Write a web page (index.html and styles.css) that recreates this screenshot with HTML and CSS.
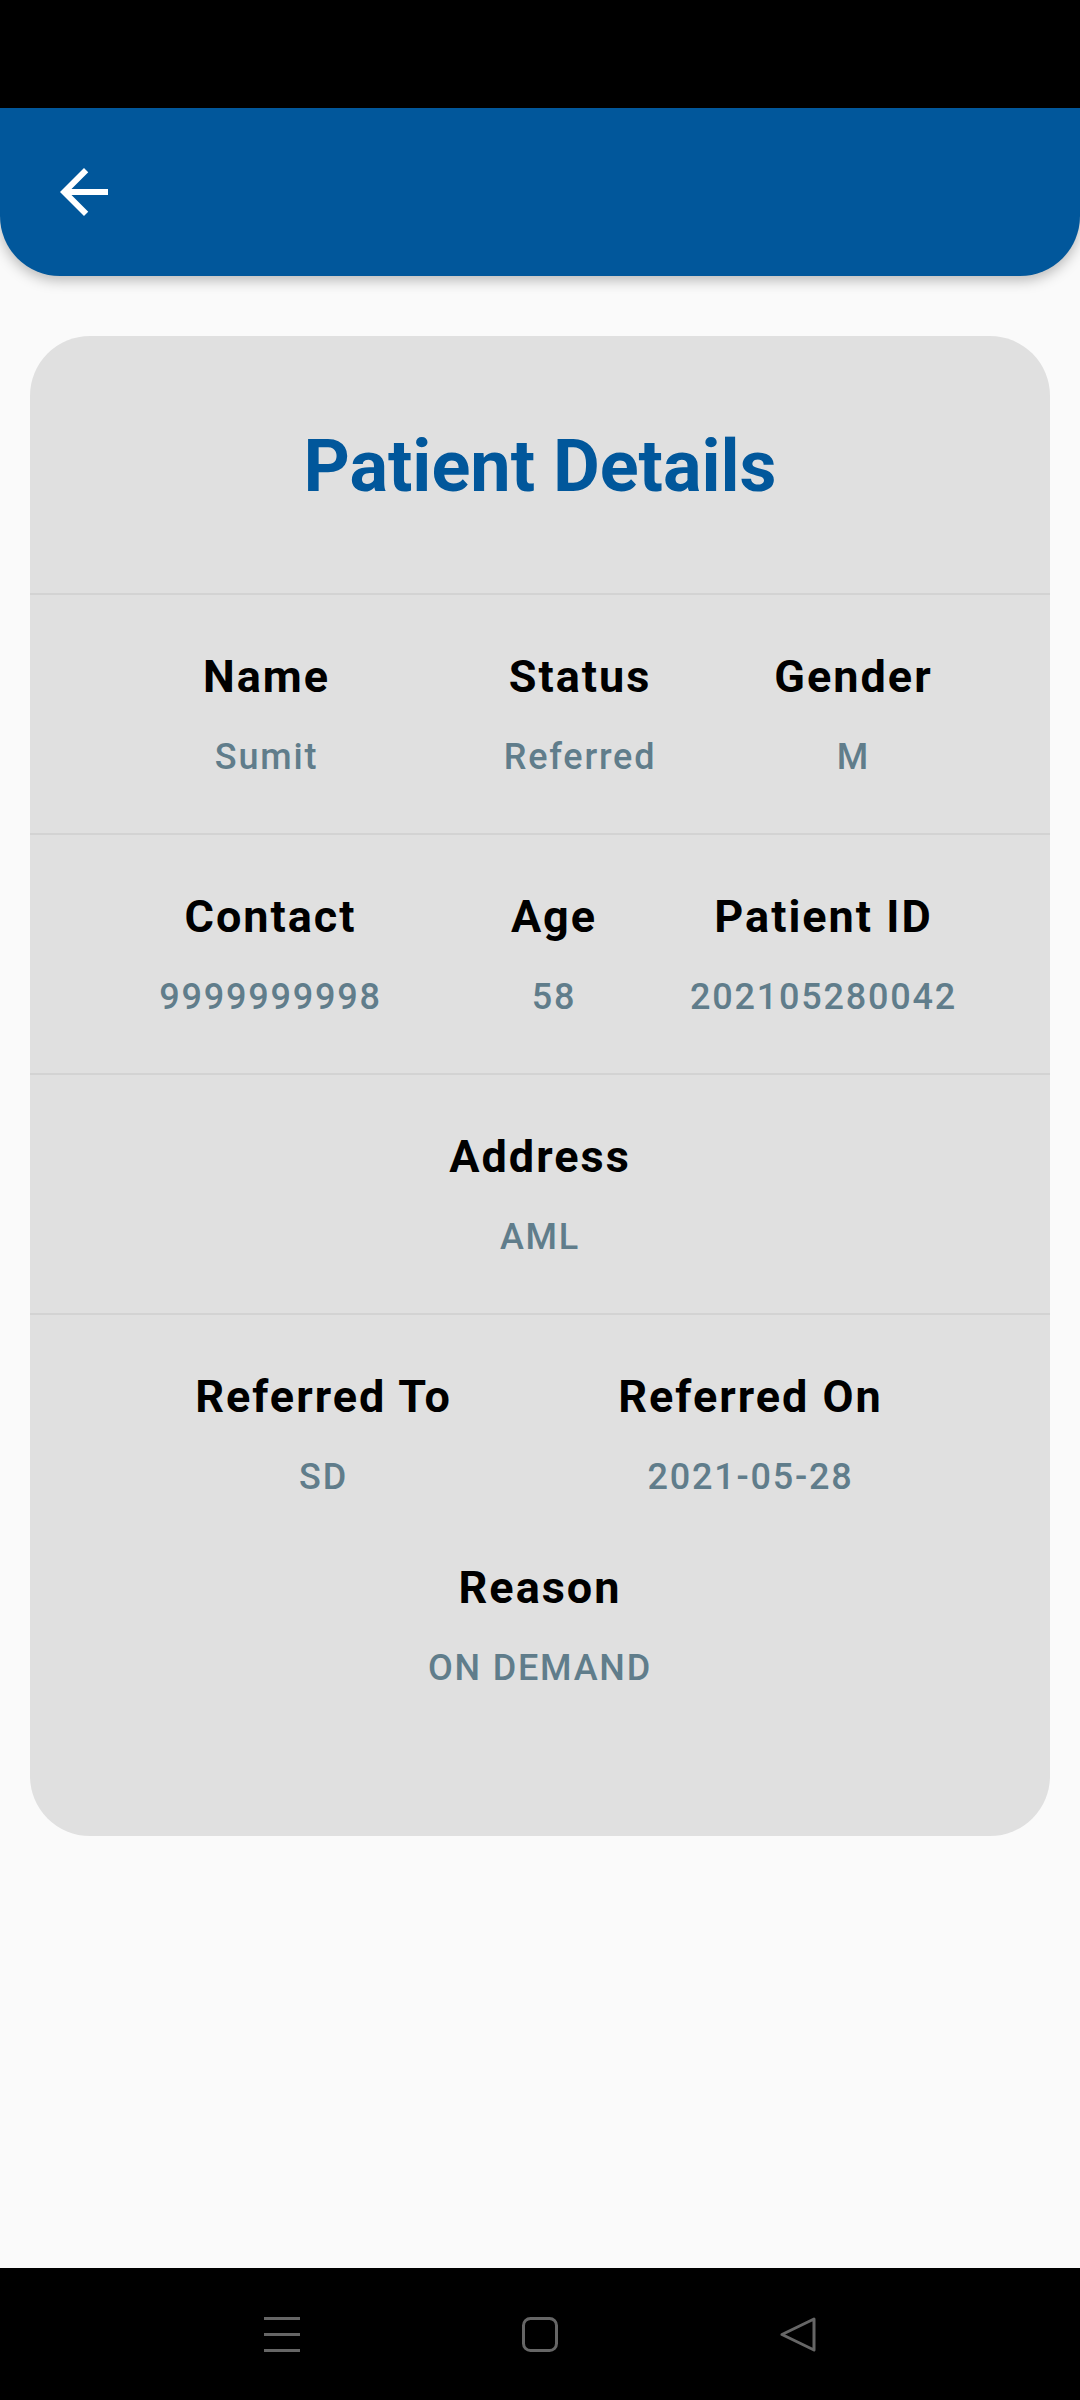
FILE: index.html
```html
<!DOCTYPE html>
<html lang="en">
<head>
<meta charset="utf-8">
<title>Patient Details</title>
<link rel="stylesheet" href="styles.css">
</head>
<body>
<div class="status-bar"></div>
<header class="app-bar">
  <button class="back-btn" aria-label="Back">
    <svg class="back-icon" viewBox="0 0 24 24" width="72" height="72"><path d="M20 11H7.83l5.59-5.59L12 4l-8 8 8 8 1.41-1.41L7.83 13H20v-2z" fill="#ffffff"/></svg>
  </button>
</header>
<main class="content">
  <section class="card">
    <h1 class="card-title">Patient Details</h1>
    <div class="section">
      <div class="grid grid-a">
        <div class="cell"><div class="label">Name</div><div class="value">Sumit</div></div>
        <div class="cell"><div class="label">Status</div><div class="value">Referred</div></div>
        <div class="cell"><div class="label">Gender</div><div class="value">M</div></div>
      </div>
    </div>
    <div class="section">
      <div class="grid grid-b">
        <div class="cell"><div class="label">Contact</div><div class="value">9999999998</div></div>
        <div class="cell"><div class="label">Age</div><div class="value">58</div></div>
        <div class="cell"><div class="label">Patient ID</div><div class="value">202105280042</div></div>
      </div>
    </div>
    <div class="section">
      <div class="cell"><div class="label">Address</div><div class="value">AML</div></div>
    </div>
    <div class="section section-last">
      <div class="grid grid-c">
        <div class="cell"><div class="label">Referred To</div><div class="value">SD</div></div>
        <div class="cell"><div class="label">Referred On</div><div class="value">2021-05-28</div></div>
      </div>
      <div class="cell reason"><div class="label">Reason</div><div class="value">ON DEMAND</div></div>
    </div>
  </section>
</main>
<nav class="sys-nav">
  <svg class="nav-icon" width="36" height="35" viewBox="0 0 36 35"><rect x="0" y="0" width="36" height="3" fill="#666"/><rect x="0" y="16" width="36" height="3" fill="#666"/><rect x="0" y="32" width="36" height="3" fill="#666"/></svg>
  <svg class="nav-icon" width="36" height="35" viewBox="0 0 36 35"><rect x="1.5" y="1.5" width="33" height="32" rx="7" fill="none" stroke="#666" stroke-width="3"/></svg>
  <svg class="nav-icon" width="36" height="35" viewBox="0 0 36 35"><path d="M34 2 L2 17.5 L34 33 Z" fill="none" stroke="#666" stroke-width="3" stroke-linejoin="round"/></svg>
</nav>
</body>
</html>
```
FILE: styles.css
```css
* { box-sizing: border-box; }
html, body { margin: 0; padding: 0; }
body {
  width: 1080px;
  height: 2400px;
  display: flex;
  flex-direction: column;
  background: #FAFAFA;
  font-family: Roboto, "Noto Sans", sans-serif;
  overflow: hidden;
}
.status-bar { height: 108px; background: #000; flex: none; }
.app-bar {
  height: 168px;
  flex: none;
  background: #01579B;
  border-radius: 0 0 60px 60px;
  box-shadow: 0 4px 14px rgba(0,0,0,0.28);
  display: flex;
  align-items: center;
  padding-left: 48px;
  position: relative;
  z-index: 1;
}
.back-btn { background: none; border: 0; padding: 0; margin: 0; width: 72px; height: 72px; display: block; }
.back-icon { display: block; }
.content { flex: 1; padding: 60px 30px 0; }
.card {
  background: #E0E0E0;
  border-radius: 60px;
  overflow: hidden;
}
.card-title {
  margin: 0;
  padding: 89px 0 84px;
  text-align: center;
  color: #01579B;
  font-size: 72px;
  line-height: 84px;
  font-weight: 700;
}
.section {
  border-top: 2px solid #D3D3D3;
  padding: 55px 0;
}
.section-last { padding-bottom: 147px; }
.grid { display: grid; }
.grid-a { grid-template-columns: 473px 154px 1fr; }
.grid-b { grid-template-columns: 481px 86px 1fr; }
.grid-c { grid-template-columns: 587px 267px 1fr; }
.cell {
  display: flex;
  flex-direction: column;
  align-items: center;
  min-width: 0;
  white-space: nowrap;
}
.reason { margin-top: 63px; }
.label {
  font-size: 45px;
  line-height: 53px;
  font-weight: 700;
  letter-spacing: 2px;
  color: #000;
}
.value {
  margin-top: 33px;
  font-size: 36px;
  line-height: 42px;
  font-weight: 500;
  letter-spacing: 1.8px;
  color: #607D8B;
}
.sys-nav {
  height: 132px;
  flex: none;
  background: #000;
  display: flex;
  justify-content: center;
  align-items: center;
  gap: 222px;
}
.nav-icon { display: block; }
```
